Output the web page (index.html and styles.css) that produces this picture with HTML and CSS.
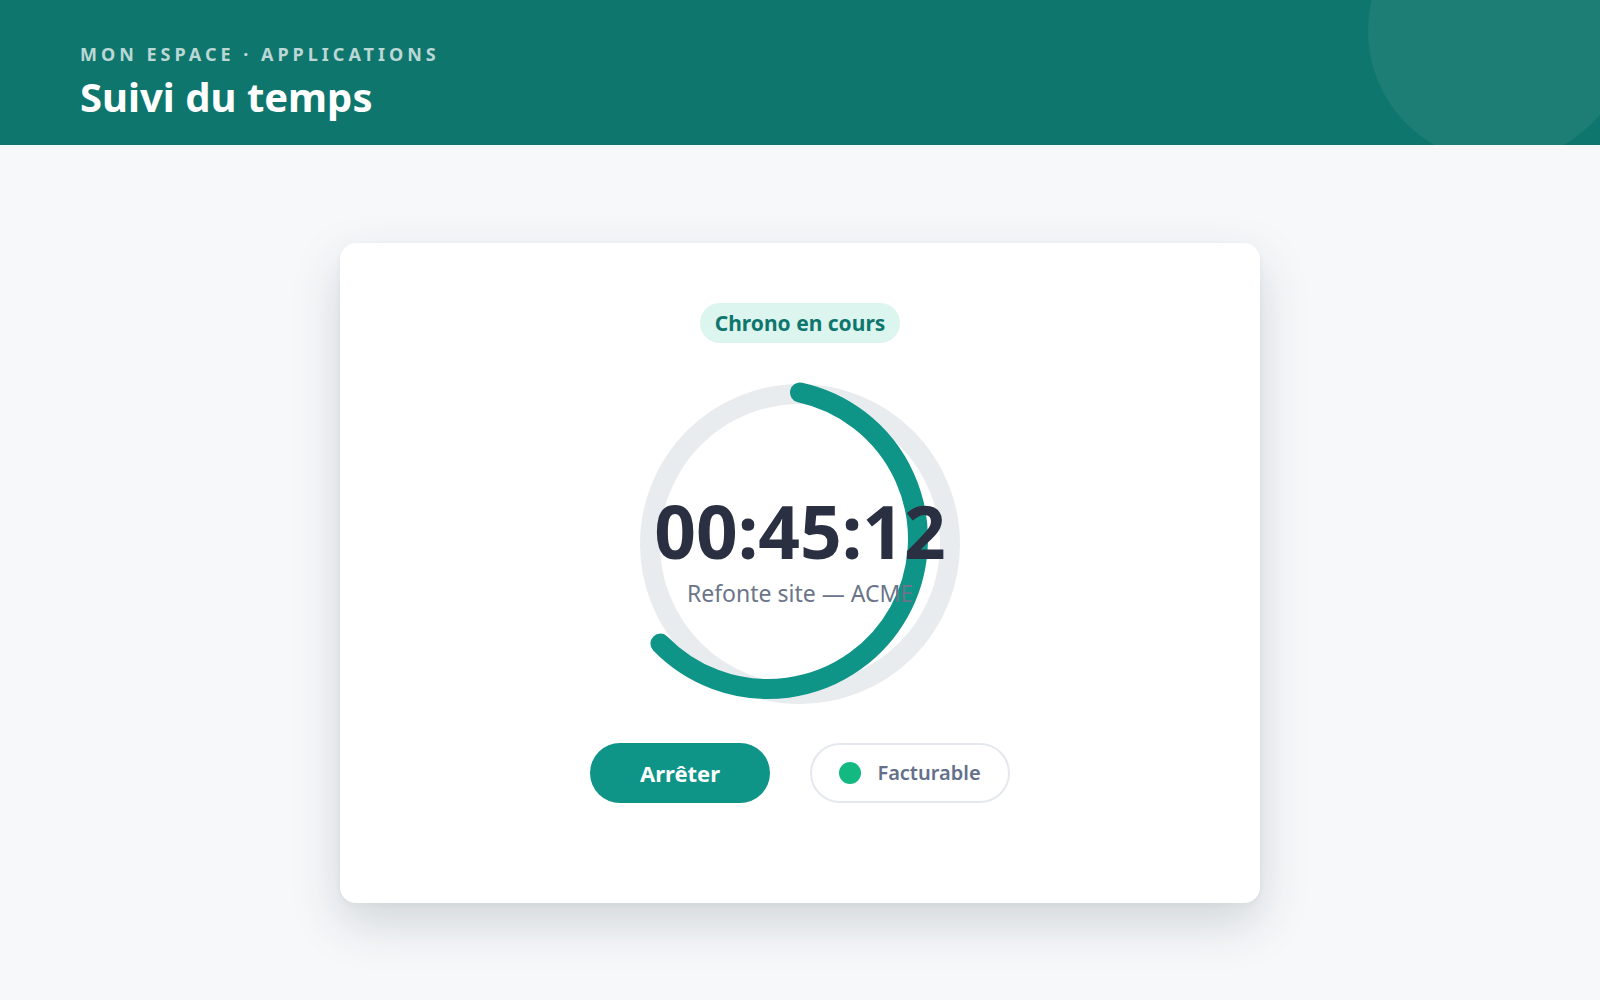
FILE: index.html
```html
<!DOCTYPE html>
<html lang="fr">
<head>
<meta charset="utf-8">
<title>Suivi du temps</title>
<link rel="stylesheet" href="styles.css">
</head>
<body>
<header class="topbar">
  <div class="topbar-deco"></div>
  <div class="eyebrow">Mon espace · Applications</div>
  <h1 class="title">Suivi du temps</h1>
</header>
<main class="main">
  <section class="card">
    <div class="status-pill">Chrono en cours</div>
    <div class="ring">
      <svg class="ring-svg" width="320" height="320" viewBox="0 0 320 320">
        <circle class="ring-track" cx="160" cy="160" r="150"/>
        <path class="ring-progress" d="M 160 8.5 A 150 150 0 1 1 20.4 259.6"/>
      </svg>
      <div class="ring-label">
        <div class="timer">00:45:12</div>
        <div class="project">Refonte site — ACME</div>
      </div>
    </div>
    <div class="actions">
      <button class="btn btn-primary">Arrêter</button>
      <button class="btn btn-toggle"><span class="dot"></span>Facturable</button>
    </div>
  </section>
</main>
</body>
</html>
```

FILE: styles.css
```css
* { box-sizing: border-box; }
html, body { margin: 0; padding: 0; }
body {
  font-family: "Noto Sans", "Open Sans", sans-serif;
  background: #f7f8fa;
  color: #2b2f42;
  overflow: hidden;
}
.topbar {
  position: relative;
  overflow: hidden;
  height: 145px;
  padding: 42px 80px 0;
  background: #0f766e;
  color: #fff;
}
.topbar-deco {
  position: absolute;
  top: -100px;
  right: -30px;
  width: 262px;
  height: 262px;
  border-radius: 50%;
  background: rgba(255, 255, 255, 0.06);
}
.eyebrow {
  position: relative;
  font-size: 18px;
  line-height: 25px;
  font-weight: 700;
  letter-spacing: 4px;
  text-transform: uppercase;
  color: rgba(255, 255, 255, 0.72);
}
.title {
  position: relative;
  margin: 6px 0 0;
  font-size: 40px;
  line-height: 48px;
  font-weight: 700;
}
.main {
  min-height: calc(100vh - 145px);
  display: flex;
  align-items: center;
  justify-content: center;
}
.card {
  width: 920px;
  height: 660px;
  background: #fff;
  border-radius: 16px;
  box-shadow: 0 20px 50px rgba(20, 45, 55, 0.17), 0 2px 6px rgba(20, 45, 55, 0.04);
  padding: 60px 0 0;
  display: flex;
  flex-direction: column;
  align-items: center;
}
.status-pill {
  width: 200px;
  height: 40px;
  border-radius: 20px;
  background: #dcf5ee;
  color: #0f766e;
  font-size: 21px;
  font-weight: 700;
  display: flex;
  align-items: center;
  justify-content: center;
}
.ring {
  position: relative;
  width: 320px;
  height: 320px;
  margin-top: 41px;
}
.ring-svg { display: block; overflow: visible; }
.ring-track {
  fill: none;
  stroke: #e8ecef;
  stroke-width: 20;
}
.ring-progress {
  fill: none;
  stroke: #0f9488;
  stroke-width: 20;
  stroke-linecap: round;
}
.ring-label {
  position: absolute;
  inset: 0;
  padding-top: 17px;
  display: flex;
  flex-direction: column;
  align-items: center;
  justify-content: center;
}
.timer {
  font-size: 73px;
  line-height: 1;
  font-weight: 700;
  color: #2b2f42;
  font-variant-numeric: tabular-nums;
}
.project {
  margin-top: 10px;
  font-size: 23px;
  line-height: 1.4;
  color: #6b7489;
}
.actions {
  margin-top: 39px;
  display: flex;
  gap: 40px;
}
.btn {
  height: 60px;
  border-radius: 30px;
  font-family: inherit;
  font-size: 22px;
  font-weight: 700;
  display: flex;
  align-items: center;
  justify-content: center;
  cursor: pointer;
}
.btn-primary {
  width: 180px;
  border: none;
  background: #0f9488;
  color: #fff;
}
.btn-toggle {
  width: 200px;
  border: 2px solid #e5e8ee;
  background: #fff;
  color: #64708a;
  font-size: 20px;
  font-weight: 600;
  gap: 16px;
}
.dot {
  width: 22px;
  height: 22px;
  border-radius: 50%;
  background: #14b981;
}
```
